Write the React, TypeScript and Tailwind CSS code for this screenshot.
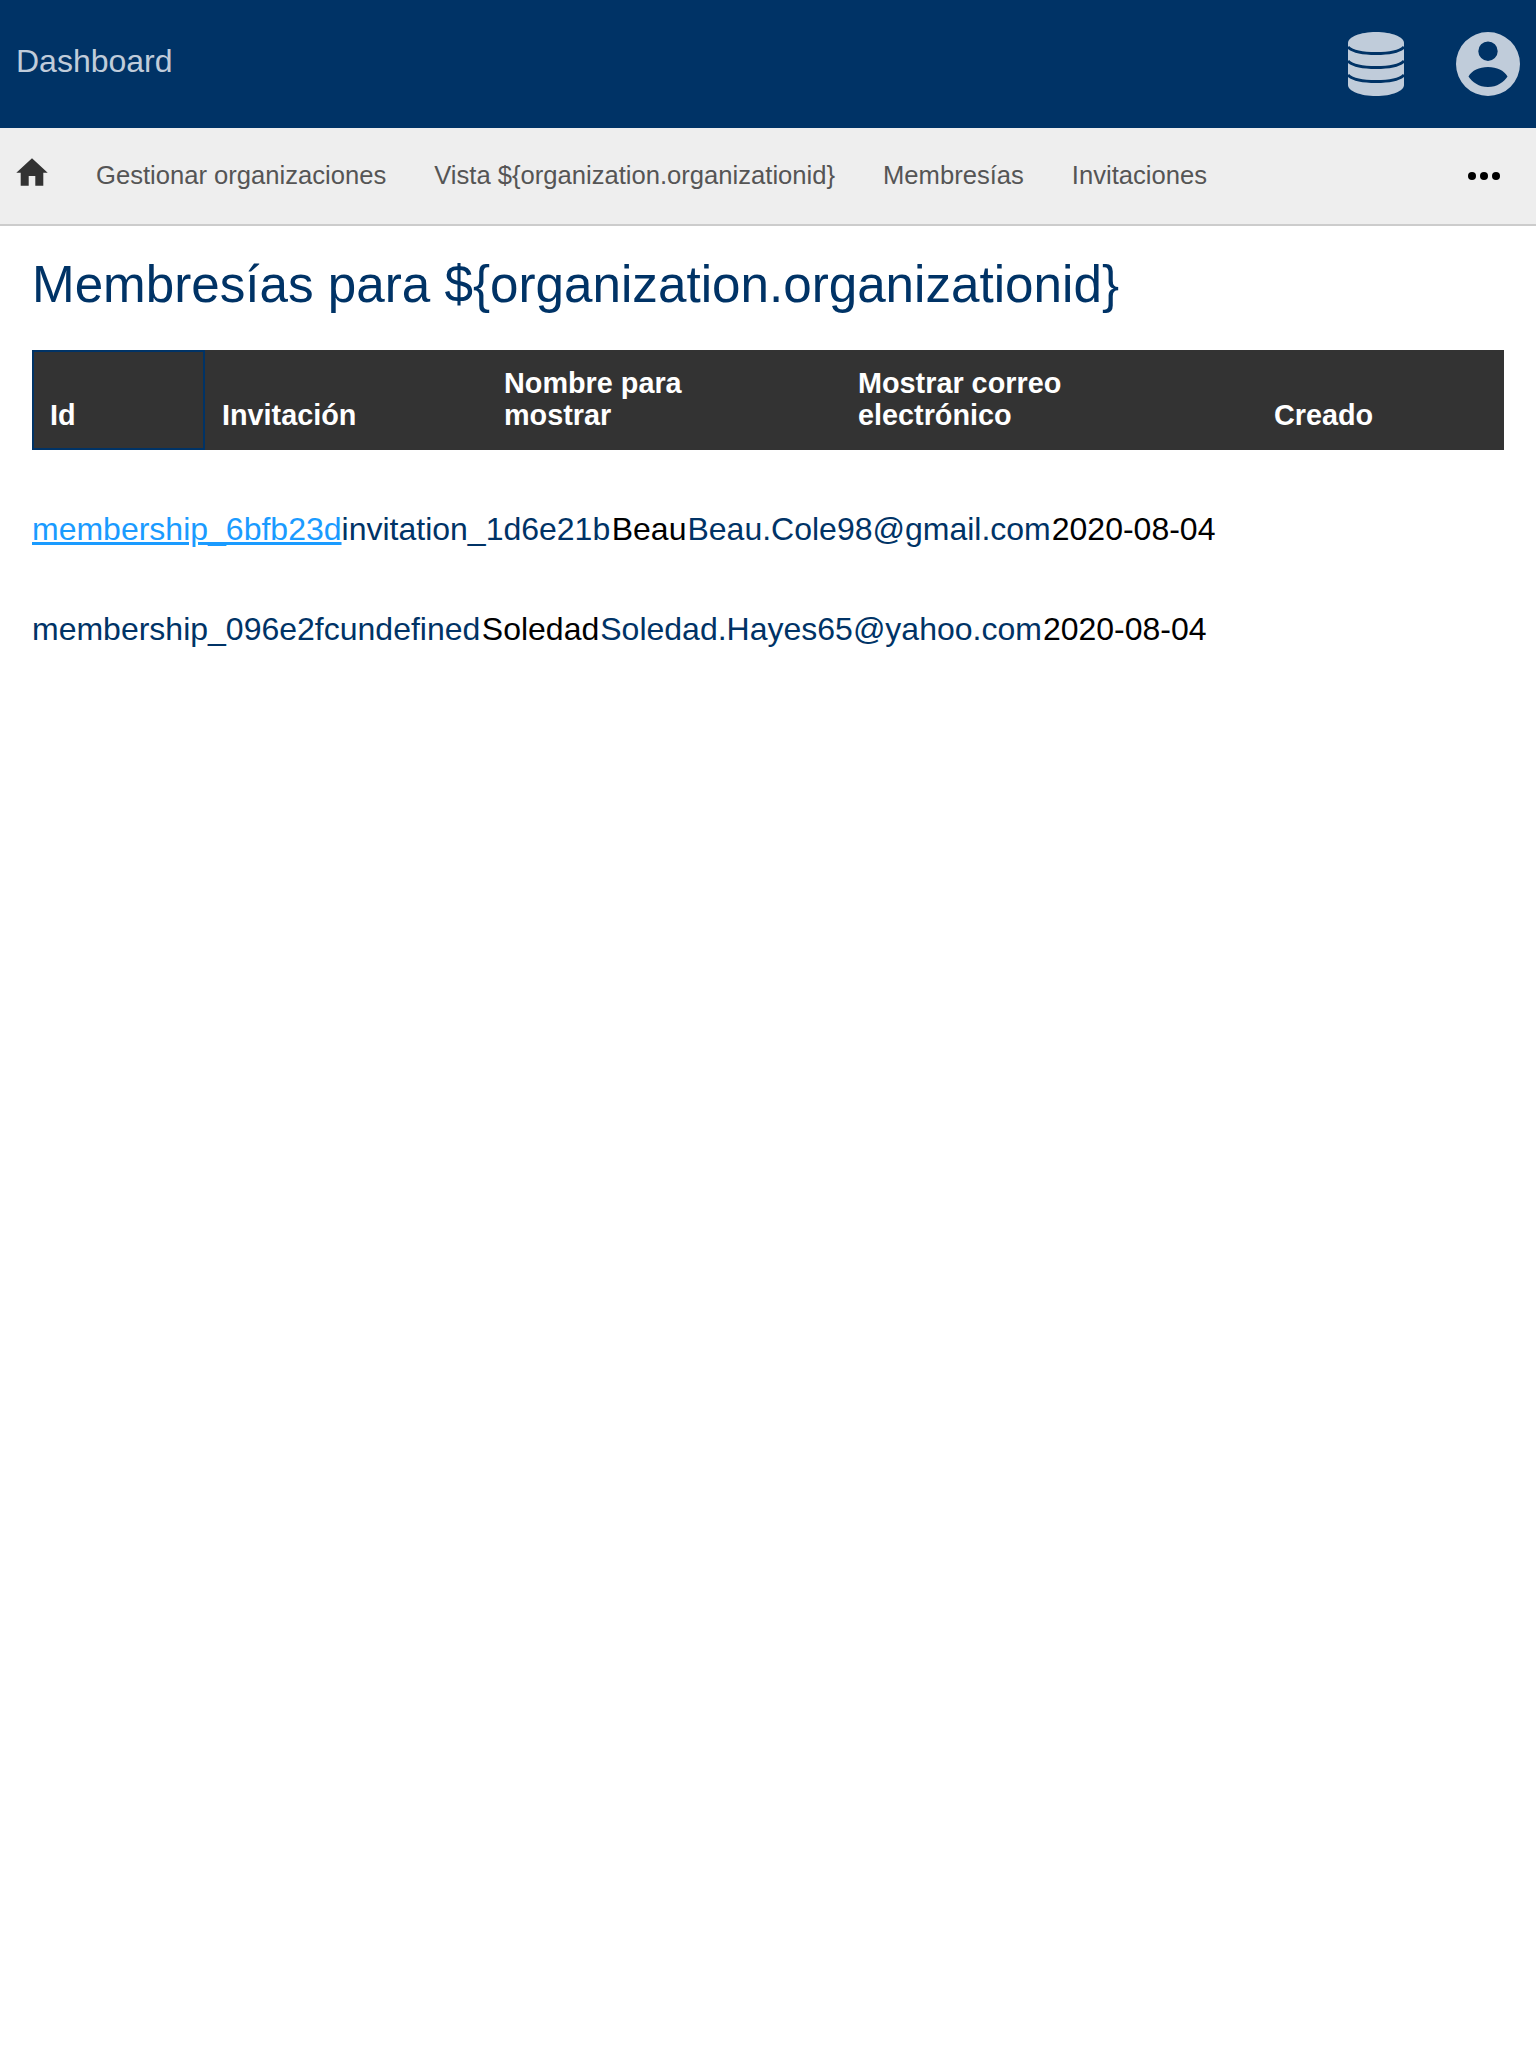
const columns = [
  { label: ['Id'], className: 'w-[173px] border-2 border-[#003366] pl-[16px] pb-[17px]' },
  { label: ['Invitación'], className: 'w-[282px] pl-[17px] pb-[19px]' },
  { label: ['Nombre para', 'mostrar'], className: 'w-[354px] pl-[17px] pb-[19px]' },
  { label: ['Mostrar correo', 'electrónico'], className: 'w-[416px] pl-[17px] pb-[19px]' },
  { label: ['Creado'], className: 'flex-1 pl-[17px] pb-[19px]' },
]

const navItems = ['Gestionar organizaciones', 'Vista ${organization.organizationid}', 'Membresías', 'Invitaciones']

const rows = [
  { id: 'membership_6bfb23d', invitation: 'invitation_1d6e21b', name: 'Beau', email: 'Beau.Cole98@gmail.com', created: '2020-08-04', active: true },
  { id: 'membership_096e2fc', invitation: 'undefined', name: 'Soledad', email: 'Soledad.Hayes65@yahoo.com', created: '2020-08-04', active: false },
]

function UserIcon() {
  return (
    <svg viewBox="0 0 64 64" className="h-[64px] w-[64px]">
      <path
        fill="#c0ccda"
        fillRule="evenodd"
        d="M32 0a32 32 0 1 1 0 64a32 32 0 1 1 0-64zM32 9.500a9.700 9.700 0 1 0 0 19.400a9.700 9.700 0 1 0 0-19.400zM32 35c-9 0-16 3.500-19.500 9.500C16 50 23 55 32 55s16-5 19.500-10.500C48 38.500 41 35 32 35z"
      />
    </svg>
  )
}

function DatabaseIcon() {
  return (
    <svg viewBox="0 0 56 64" className="h-[64px] w-[56px]">
      <path fill="#c0ccda" d="M0 11C0 5 12 0 28 0s28 5 28 11v42c0 6-12 11-28 11S0 59 0 53z" />
      <g fill="none" stroke="#003366" strokeWidth="3">
        <path d="M0 15C4 19 14 21.500 28 21.500S52 19 56 15" />
        <path d="M0 29C4 33 14 35.500 28 35.500S52 33 56 29" />
        <path d="M0 43C4 47 14 49.500 28 49.500S52 47 56 43" />
      </g>
    </svg>
  )
}

function HomeIcon() {
  return (
    <svg viewBox="0 0 32 28" className="mt-[-8px] h-[28px] w-[32px]">
      <path
        fill="#333333"
        d="M16 0.300L31.700 14.700H27.300V27.700H19.300V18H12.700V27.700H4.700V14.700H0.300Z"
      />
    </svg>
  )
}

export default function App() {
  return (
    <div className="min-h-screen bg-white font-['Liberation_Sans',Arial,sans-serif]">
      <header className="flex h-[128px] items-center bg-[#003366] pl-[16px]">
        <span className="mb-[6px] text-[32px] leading-none text-[#c0ccda]">Dashboard</span>
        <div className="ml-auto flex items-center gap-[52px] pr-[16px]">
          <DatabaseIcon />
          <UserIcon />
        </div>
      </header>

      <nav className="flex h-[98px] items-center border-b-2 border-[#cccccc] bg-[#eeeeee] pl-[16px] pr-[36px]">
        <HomeIcon />
        <div className="mb-[1px] ml-[48px] flex gap-[48px] text-[25.6px] text-[#555555]">
          {navItems.map((item) => (
            <span key={item}>{item}</span>
          ))}
        </div>
        <div className="ml-auto flex gap-[4px]">
          <span className="h-[8px] w-[8px] rounded-full bg-black" />
          <span className="h-[8px] w-[8px] rounded-full bg-black" />
          <span className="h-[8px] w-[8px] rounded-full bg-black" />
        </div>
      </nav>

      <main className="px-[32px]">
        <h1 className="mt-[26px] text-[51.2px] leading-[66px] text-[#003366]">
          Membresías para {'${organization.organizationid}'}
        </h1>

        <div className="mt-[32px] flex h-[100px] bg-[#333333] text-[28.8px] font-bold leading-[32px] text-white">
          {columns.map((col) => (
            <div key={col.label[0]} className={`flex flex-col justify-end ${col.className}`}>
              {col.label.map((line) => (
                <span key={line}>{line}</span>
              ))}
            </div>
          ))}
        </div>

        <div className="mt-[29px]">
          {rows.map((row) => (
            <table key={row.id} className="h-[100px] text-[32px] [text-rendering:optimizeSpeed]">
              <tbody>
                <tr>
                  <td className="p-0">
                    {row.active ? (
                      <a href="#" className="text-[#1a9bff] underline">{row.id}</a>
                    ) : (
                      <span className="text-[#003366]">{row.id}</span>
                    )}
                  </td>
                  <td className="p-0 pr-[1.5px] text-[#003366]">{row.invitation}</td>
                  <td className="p-0 pr-[1px] text-black">{row.name}</td>
                  <td className="p-0 pr-[1px] text-[#003366]">{row.email}</td>
                  <td className="p-0 text-black">{row.created}</td>
                </tr>
              </tbody>
            </table>
          ))}
        </div>
      </main>
    </div>
  )
}
